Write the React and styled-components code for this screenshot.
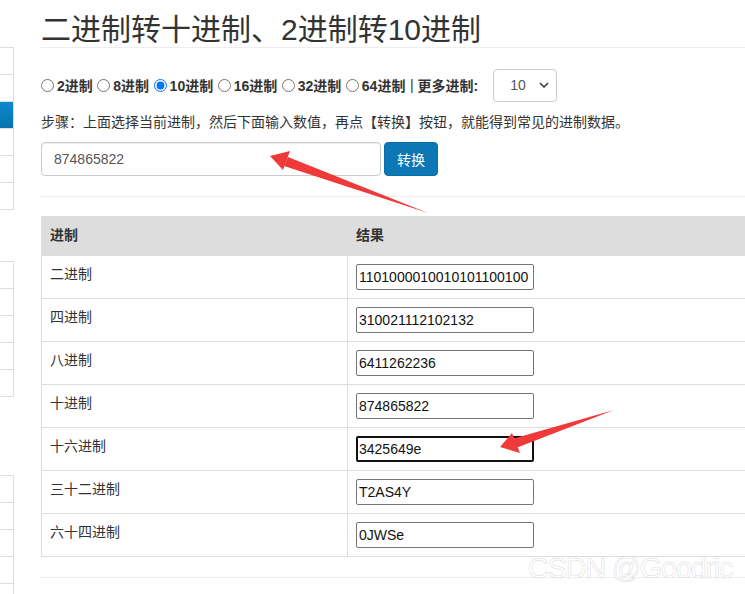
import React from "react";
import styled, { createGlobalStyle } from "styled-components";

const Global = createGlobalStyle`
  html, body { margin: 0; padding: 0; background: #fff; overflow: hidden; }
  body { font-family: "Liberation Sans", "Noto Sans CJK SC", Arial, sans-serif; font-size: 14px; color: #333; }
  * { box-sizing: border-box; }
`;

const Page = styled.div`
  position: relative;
  display: flex;
  width: 745px;
  height: 594px;
  overflow: hidden;
`;

const Sidebar = styled.div`
  flex: 0 0 14px;
  display: flex;
  flex-direction: column;
`;

const SideList = styled.ul`
  list-style: none;
  margin: ${(p) => p.$top}px 0 0;
  padding: 0;
  border-top: 1px solid #ddd;
`;

const SideItem = styled.li`
  width: 14px;
  height: 27px;
  border-right: 1px solid #ddd;
  border-bottom: 1px solid #ddd;
  background: ${(p) => (p.$active ? "linear-gradient(#0b89cd, #0a72ad)" : "#fff")};
`;

const Main = styled.main`
  flex: 0 0 730px;
  margin-left: 27px;
  display: flex;
  flex-direction: column;
`;

const Title = styled.h1`
  margin: 13px 0 0;
  font-size: 30px;
  line-height: 34px;
  font-weight: 400;
  color: #333;
  border-bottom: 1px solid #eee;
`;

const RadioRow = styled.div`
  margin-top: 21px;
  height: 32px;
  display: flex;
  align-items: center;
  font-size: 14px;
`;

const RadioItem = styled.label`
  display: flex;
  align-items: center;
  margin-right: 4.5px;
  font-weight: 700;
  color: #333;
  input {
    margin: 0 3px 0 0;
    width: 13px;
    height: 13px;
  }
`;

const Sep = styled.span`
  margin: 0 4px 0 0;
  color: #333;
`;

const MoreLabel = styled.span`
  font-weight: 700;
  margin-right: 15px;
`;

const SelectBox = styled.div`
  width: 64px;
  height: 33px;
  border: 1px solid #ccc;
  border-radius: 4px;
  display: flex;
  align-items: center;
  justify-content: space-between;
  padding: 0 7px 0 16px;
  color: #555;
  font-size: 14px;
`;

const Steps = styled.p`
  margin: 11px 0 0;
  line-height: 20px;
  font-size: 14px;
  color: #333;
`;

const InputRow = styled.div`
  margin-top: 10px;
  display: flex;
  gap: 3px;
`;

const MainInput = styled.div`
  width: 340px;
  height: 34px;
  border: 1px solid #ccc;
  border-radius: 4px;
  padding: 0 12px;
  display: flex;
  align-items: center;
  color: #555;
  font-size: 14px;
  box-shadow: inset 0 1px 1px rgba(0, 0, 0, 0.075);
`;

const Button = styled.button`
  width: 54px;
  height: 34px;
  border: 1px solid #0a6ea8;
  border-radius: 4px;
  background: #0c77b5;
  color: #fff;
  font-family: inherit;
  font-size: 14px;
  padding: 0;
`;

const Rule = styled.hr`
  margin: ${(p) => p.$top}px 0 0;
  border: 0;
  border-top: 1px solid #eee;
  height: 0;
`;

const Table = styled.table`
  margin-top: 19px;
  width: 730px;
  border-collapse: collapse;
  border: 1px solid #ddd;
  font-size: 14px;
`;

const Th = styled.th`
  text-align: left;
  background: #ddd;
  padding: 8px 8px 9px;
  line-height: 20px;
  font-weight: 700;
  color: #333;
  border: 1px solid #ddd;
  border-bottom-width: 2px;
  width: ${(p) => p.$w || "auto"};
`;

const Td = styled.td`
  vertical-align: top;
  padding: 8px;
  line-height: 20px;
  color: #333;
  border: 1px solid #ddd;
`;

const ResultInput = styled.div`
  width: 178px;
  height: 26px;
  border: ${(p) => (p.$focus ? "2px solid #101010" : "1px solid #767676")};
  border-radius: 2px;
  padding: 0 ${(p) => (p.$focus ? 1 : 2)}px;
  display: flex;
  align-items: center;
  overflow: hidden;
  white-space: nowrap;
  color: #111;
  font-size: 14px;
`;

const Overlay = styled.svg`
  position: absolute;
  left: 0;
  top: 0;
  pointer-events: none;
`;

const Watermark = styled.div`
  position: absolute;
  left: 528px;
  top: 552px;
  font-family: "Liberation Sans", Arial, sans-serif;
  font-size: 29px;
  letter-spacing: -1.3px;
  color: rgba(255, 255, 255, 0.85);
  -webkit-text-stroke: 1px rgba(0, 0, 0, 0.11);
  white-space: nowrap;
`;

const radios = [
  { l: "2进制" },
  { l: "8进制" },
  { l: "10进制", c: true },
  { l: "16进制" },
  { l: "32进制" },
  { l: "64进制" },
];

const rows = [
  ["二进制", "1101000010010101100100"],
  ["四进制", "310021112102132"],
  ["八进制", "6411262236"],
  ["十进制", "874865822"],
  ["十六进制", "3425649e", true],
  ["三十二进制", "T2AS4Y"],
  ["六十四进制", "0JWSe"],
];

function Arrow({ tail, tip, left, right, neckA, neckB }) {
  return (
    <g fill="#f03a3a">
      <polygon points={`${tip[0]},${tip[1]} ${left[0]},${left[1]} ${right[0]},${right[1]}`} />
      <polygon points={`${tail[0]},${tail[1]} ${neckA[0]},${neckA[1]} ${neckB[0]},${neckB[1]}`} />
    </g>
  );
}

export default function App() {
  return (
    <>
      <Global />
      <Page>
        <Sidebar>
          <SideList $top={47}>
            {[0, 1, 2, 3, 4, 5].map((i) => (
              <SideItem key={i} $active={i === 2} />
            ))}
          </SideList>
          <SideList $top={51}>
            {[0, 1, 2, 3, 4].map((i) => (
              <SideItem key={i} />
            ))}
          </SideList>
          <SideList $top={78}>
            {[0, 1, 2, 3, 4].map((i) => (
              <SideItem key={i} />
            ))}
          </SideList>
        </Sidebar>
        <Main>
          <Title>二进制转十进制、2进制转10进制</Title>
          <RadioRow>
            {radios.map((r) => (
              <RadioItem key={r.l}>
                <input type="radio" name="base" defaultChecked={!!r.c} />
                {r.l}
              </RadioItem>
            ))}
            <Sep>|</Sep>
            <MoreLabel>更多进制:</MoreLabel>
            <SelectBox>
              <span>10</span>
              <svg width="10" height="8" viewBox="0 0 10 8">
                <path d="M1 2 L5 6 L9 2" fill="none" stroke="#444" strokeWidth="1.7" />
              </svg>
            </SelectBox>
          </RadioRow>
          <Steps>步骤：上面选择当前进制，然后下面输入数值，再点【转换】按钮，就能得到常见的进制数据。</Steps>
          <InputRow>
            <MainInput>874865822</MainInput>
            <Button>转换</Button>
          </InputRow>
          <Rule $top={20} />
          <Table>
            <thead>
              <tr>
                <Th $w="306px">进制</Th>
                <Th>结果</Th>
              </tr>
            </thead>
            <tbody>
              {rows.map(([l, v, f]) => (
                <tr key={l}>
                  <Td>{l}</Td>
                  <Td>
                    <ResultInput $focus={f}>{v}</ResultInput>
                  </Td>
                </tr>
              ))}
            </tbody>
          </Table>
          <Rule $top={20} />
        </Main>
        <Overlay width="745" height="594" viewBox="0 0 745 594">
          <Arrow
            tail={[428, 213]}
            tip={[270, 156]}
            left={[290, 151]}
            right={[283, 170]}
            neckA={[288, 157]}
            neckB={[284, 166]}
          />
          <Arrow
            tail={[614, 410]}
            tip={[500, 447]}
            left={[512, 433]}
            right={[520, 453]}
            neckA={[512, 439]}
            neckB={[516, 448]}
          />
        </Overlay>
        <Watermark>CSDN @Goodric</Watermark>
      </Page>
    </>
  );
}
